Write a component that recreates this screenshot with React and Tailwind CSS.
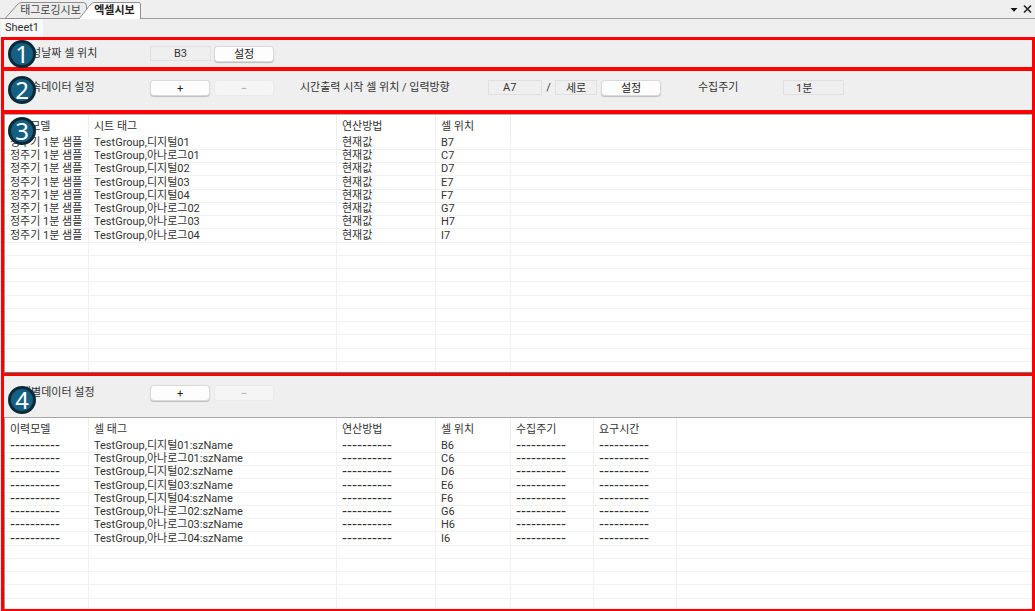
import React from "react";

const historyRows = [
  ["디지털01", "B"],
  ["아나로그01", "C"],
  ["디지털02", "D"],
  ["디지털03", "E"],
  ["디지털04", "F"],
  ["아나로그02", "G"],
  ["아나로그03", "H"],
  ["아나로그04", "I"],
];

const cellRows = [
  ["디지털01", "B"],
  ["아나로그01", "C"],
  ["디지털02", "D"],
  ["디지털03", "E"],
  ["디지털04", "F"],
  ["아나로그02", "G"],
  ["아나로그03", "H"],
  ["아나로그04", "I"],
];

const DASHES = "----------";

function Badge({ children, className }) {
  return (
    <span
      className={`absolute left-1 z-10 flex size-7 items-center justify-center rounded-full border-[3px] border-[#0a2a3a] bg-[#156082] font-['Noto_Sans',sans-serif] text-[24px] leading-none text-white ${className}`}
    >
      {children}
    </span>
  );
}

function PushButton({ children, disabled, label, className = "" }) {
  return (
    <button
      type="button"
      disabled={disabled}
      aria-label={label}
      className={`mt-px flex h-[14px] w-[58px] shrink-0 items-center justify-center rounded-[3px] bg-[#fdfdfd] leading-none text-[#222] shadow-[0_0_0_1px_#d9d9d9,0_1px_1px_1px_#bdbdbd] disabled:bg-[#f5f5f5] disabled:text-[#a5a5a5] disabled:shadow-[0_0_0_1px_#eaeaea] ${className}`}
    >
      {children}
    </button>
  );
}

function Field({ value, label, className }) {
  return (
    <input
      readOnly
      value={value}
      aria-label={label}
      className={`h-[15px] shrink-0 border border-[#e0e0e0] bg-[#efefef] pb-px leading-[12px] text-[#333] outline-none ${className}`}
    />
  );
}

function Grid({ columns, rows, emptyRows, label }) {
  const blanks = Array.from({ length: emptyRows }, () => columns.map(() => ""));
  return (
    <table
      aria-label={label}
      className="w-full table-fixed border-separate border-spacing-0 bg-white text-left"
    >
      <colgroup>
        {columns.map((c) => (
          <col key={c.title} className={c.width} />
        ))}
        <col />
      </colgroup>
      <thead>
        <tr className="h-[22px]">
          {columns.map((c) => (
            <th
              key={c.title}
              scope="col"
              className="border-r border-[#ececec] p-0 pl-[5px] font-normal leading-none whitespace-nowrap"
            >
              {c.title}
            </th>
          ))}
          <td className="p-0" />
        </tr>
      </thead>
      <tbody>
        {[...rows, ...blanks].map((row, i) => (
          <tr key={i} className="h-[13px] nth-[4n]:h-[14px] last:h-[10px]">
            {row.map((value, j) => (
              <td
                key={j}
                className="border-r border-b border-[#f1f1f1] p-0 pl-[5px] leading-[12px] whitespace-nowrap"
              >
                {value === DASHES ? (
                  <span className="block h-[12px] font-['Liberation_Sans',sans-serif] text-[15px] leading-[10px]">
                    {value}
                  </span>
                ) : (
                  value
                )}
              </td>
            ))}
            <td className="border-b border-[#f1f1f1] p-0" />
          </tr>
        ))}
      </tbody>
    </table>
  );
}

const historyColumns = [
  { title: "이력모델", width: "w-[84px]" },
  { title: "시트 태그", width: "w-[248px]" },
  { title: "연산방법", width: "w-[99px]" },
  { title: "셀 위치", width: "w-[75px]" },
];

const cellColumns = [
  { title: "이력모델", width: "w-[84px]" },
  { title: "셀 태그", width: "w-[248px]" },
  { title: "연산방법", width: "w-[99px]" },
  { title: "셀 위치", width: "w-[75px]" },
  { title: "수집주기", width: "w-[83px]" },
  { title: "요구시간", width: "w-[83px]" },
];

export default function App() {
  return (
    <div className="min-h-screen overflow-hidden bg-[#efefef] font-['Roboto','Noto_Sans_CJK_KR',sans-serif] text-[11px] leading-none text-[#333]">
      <header className="flex h-[19px] items-end justify-between border-b border-[#9c9c9c] pl-[5px]">
        <div role="tablist" className="-mb-px flex h-[17px]">
          <button
            type="button"
            role="tab"
            aria-selected="false"
            className="relative h-[17px] w-[82px] pl-[9px] text-center leading-none whitespace-nowrap text-[#444]"
          >
            <svg className="absolute inset-0" width="82" height="17" viewBox="0 0 82 17" aria-hidden="true">
              <path d="M0 16.5 L12 3 Q14 .5 17 .5 H78 Q81.500 .5 81.500 4 V16.500 Z" fill="#ececec" stroke="#8e8e8e" />
            </svg>
            <span className="relative">태그로깅시보</span>
          </button>
          <button
            type="button"
            role="tab"
            aria-selected="true"
            className="relative -ml-2 h-[17px] w-[62px] pl-[9px] text-center leading-none font-bold text-[#222]"
          >
            <svg className="absolute inset-0" width="62" height="17" viewBox="0 0 62 17" aria-hidden="true">
              <path d="M0 17 L11 3 Q13 .5 16 .5 H60 Q61.500 .5 61.500 2 V17" fill="#fff" stroke="#8e8e8e" />
            </svg>
            <span className="relative">엑셀시보</span>
          </button>
        </div>
        <div className="flex items-center gap-[5px] self-center pr-[3px]">
          <button type="button" aria-label="목록">
            <svg width="8" height="10" viewBox="0 0 8 10" aria-hidden="true">
              <path d="M.5 4 H7.500 L4 7.800 Z" fill="#111" />
            </svg>
          </button>
          <button type="button" aria-label="닫기">
            <svg width="9" height="10" viewBox="0 0 9 10" aria-hidden="true">
              <path d="M1 1.500 L8 8.500 M8 1.500 L1 8.500" stroke="#222" strokeWidth="1.6" />
            </svg>
          </button>
        </div>
      </header>

      <nav className="flex h-[18px] pl-px">
        <button type="button" className="w-[42px] bg-[#f8f8f8] pb-px text-center leading-none">
          Sheet1
        </button>
      </nav>

      <main className="ml-px border-x-[3px] border-b-[3px] border-[#fe0000]">
        <section className="relative flex h-[30px] items-center border-t-[3px] border-[#fe0000] pl-[17px]">
          <Badge className="top-0">1</Badge>
          <span className="w-[129px] shrink-0">생성날짜 셀 위치</span>
          <Field label="생성날짜 셀 위치" value="B3" className="w-[61px] text-center" />
          <PushButton className="ml-1">설정</PushButton>
        </section>

        <section className="relative flex h-[43px] items-start border-t-4 border-[#fe0000] pt-[9px] pl-[17px]">
          <Badge className="top-[5px]">2</Badge>
          <span className="flex h-[15px] w-[130px] shrink-0 items-center">연속데이터 설정</span>
          <PushButton label="연속데이터 추가">+</PushButton>
          <PushButton label="연속데이터 삭제" disabled className="ml-[6px]">
            −
          </PushButton>
          <span className="ml-[27px] flex h-[15px] w-[188px] shrink-0 items-center whitespace-nowrap">
            시간출력 시작 셀 위치 / 입력방향
          </span>
          <Field label="시간출력 시작 셀 위치" value="A7" className="w-[54px] pl-[14px]" />
          <span className="flex h-[15px] w-[13px] items-center justify-center">/</span>
          <Field label="입력방향" value="세로" className="w-[42px] text-center" />
          <PushButton className="ml-[5px]">설정</PushButton>
          <span className="ml-[38px] flex h-[15px] w-[85px] shrink-0 items-center">수집주기</span>
          <Field label="수집주기" value="1분" className="w-[61px] pl-[12px]" />
        </section>

        <section className="relative border-t-4 border-[#fe0000]">
          <Badge className="top-[3px]">3</Badge>
          <div className="border-t border-b border-l border-t-[#a9b4b8] border-b-[#6d7d88] border-l-[#9a9a9a]">
            <Grid label="연속데이터" columns={historyColumns} emptyRows={10} rows={historyRows.map(([tag, cell]) => [
              "정주기 1분 샘플",
              `TestGroup,${tag}`,
              "현재값",
              `${cell}7`,
            ])} />
          </div>
        </section>

        <section className="relative border-t-[3px] border-[#fe0000]">
          <Badge className="top-[10px]">4</Badge>
          <div className="flex h-[41px] items-start pt-[9px] pl-[17px]">
            <span className="flex h-[15px] w-[130px] shrink-0 items-center">개별데이터 설정</span>
            <PushButton label="개별데이터 추가">+</PushButton>
            <PushButton label="개별데이터 삭제" disabled className="ml-[6px]">
              −
            </PushButton>
          </div>
          <div className="border-t border-l border-t-[#a8a8a8] border-l-[#9a9a9a]">
            <Grid label="개별데이터" columns={cellColumns} emptyRows={5} rows={cellRows.map(([tag, cell]) => [
              DASHES,
              `TestGroup,${tag}:szName`,
              DASHES,
              `${cell}6`,
              DASHES,
              DASHES,
            ])} />
          </div>
        </section>
      </main>
    </div>
  );
}
